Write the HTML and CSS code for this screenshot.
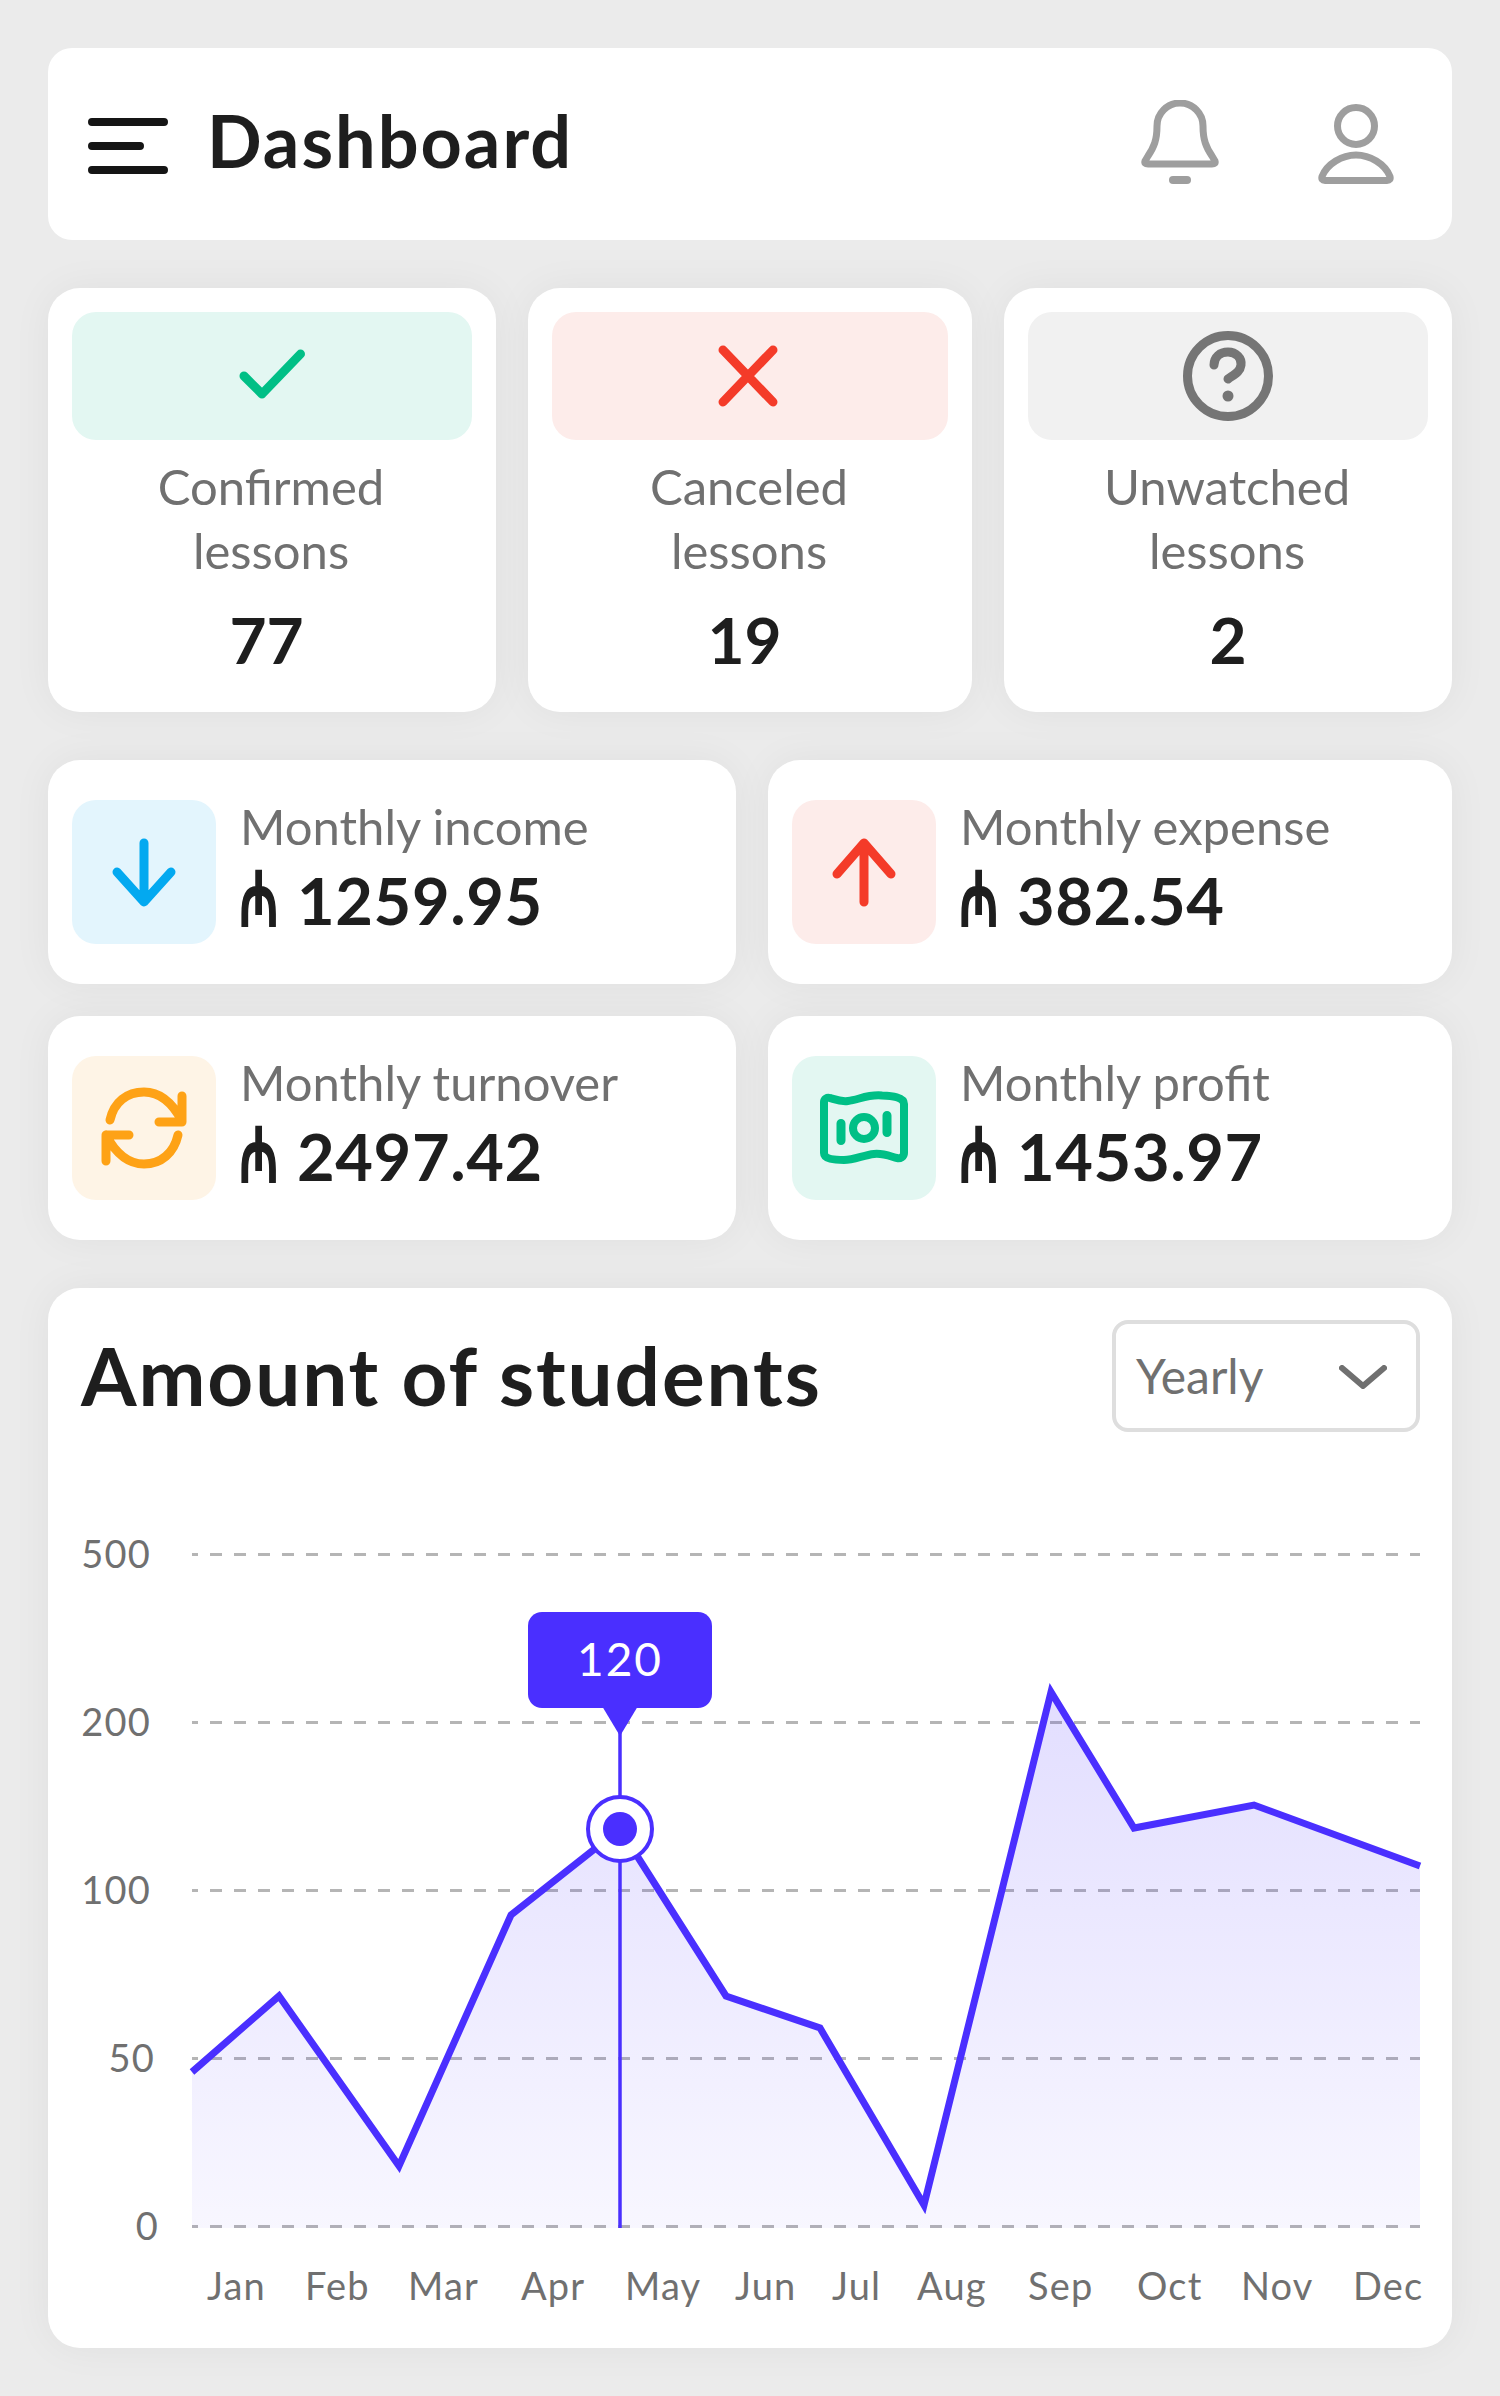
FILE: index.html

```html
<!DOCTYPE html>
<html lang="en">
<head>
  <meta charset="UTF-8">
  <title>Dashboard</title>
  <link rel="stylesheet" href="styles.css">
</head>
<body>
  <header class="topbar">
    <svg class="menu-icon" width="80" height="56" viewBox="0 0 80 56">
      <path d="M4 4H76M4 28H52M4 52H76" />
    </svg>
    <h1>Dashboard</h1>
    <svg class="bell-icon" width="80" height="84" viewBox="0 0 80 84">
      <path d="M17 26a23 23 0 0 1 46 0c0 14 3 21 9 30l3 5q1 3-3 3H8q-4 0-3-3l3-5c6-9 9-16 9-30z" />
      <path class="clapper" d="M33 80H47" />
    </svg>
    <svg class="user-icon" width="76" height="80" viewBox="0 0 76 80">
      <circle cx="38" cy="22" r="18.500" />
      <path d="M7 76.500H69q4 0 3-4C67 60 52 51 38 51S9 60 4 72.500q-1 4 3 4z" />
    </svg>
  </header>

  <section class="lessons">
    <div class="card lesson">
      <div class="lesson-icon bg-green">
        <svg width="80" height="80" viewBox="0 0 80 80"><path class="st-green" d="M12 40L30 58 68.500 18" /></svg>
      </div>
      <p class="label">Confirmed<br>lessons</p>
      <p class="count shift">77</p>
    </div>
    <div class="card lesson">
      <div class="lesson-icon bg-red">
        <svg width="80" height="80" viewBox="0 0 80 80"><path class="st-red" d="M13 14L63 66M63 14L13 66" /></svg>
      </div>
      <p class="label">Canceled<br>lessons</p>
      <p class="count shift">19</p>
    </div>
    <div class="card lesson">
      <div class="lesson-icon bg-grey">
        <svg width="100" height="100" viewBox="0 0 100 100">
          <circle class="st-grey" cx="50" cy="50" r="40.500" />
          <path class="st-grey" d="M36 39c0-8 6-13 14-13s14 6 13 13c-1 7-6 9-13 14" />
          <circle class="fl-grey" cx="50" cy="70" r="5.500" />
        </svg>
      </div>
      <p class="label">Unwatched<br>lessons</p>
      <p class="count">2</p>
    </div>
  </section>

  <section class="stats">
    <div class="card stat">
      <div class="stat-icon bg-blue">
        <svg width="144" height="144" viewBox="0 0 144 144"><path class="st-blue" d="M72 43V100M45 72L72 102 99 72" /></svg>
      </div>
      <div>
        <p class="label">Monthly income</p>
        <p class="amount"><span class="manat">₼</span> 1259.95</p>
      </div>
    </div>
    <div class="card stat">
      <div class="stat-icon bg-red">
        <svg width="144" height="144" viewBox="0 0 144 144"><path class="st-red" d="M72 102V44M45 74L72 43 99 74" /></svg>
      </div>
      <div>
        <p class="label">Monthly expense</p>
        <p class="amount"><span class="manat">₼</span> 382.54</p>
      </div>
    </div>
    <div class="card stat">
      <div class="stat-icon bg-orange">
        <svg width="144" height="144" viewBox="0 0 144 144">
          <path class="st-orange" d="M38 64C42 46 55 36 72 36C88 36 100 46 110 65M87 66H110V40" />
          <path class="st-orange" d="M106 79C102 97 89 108 72 108C56 108 44 98 34 79M57 79H34V105" />
        </svg>
      </div>
      <div>
        <p class="label">Monthly turnover</p>
        <p class="amount"><span class="manat">₼</span> 2497.42</p>
      </div>
    </div>
    <div class="card stat">
      <div class="stat-icon bg-green">
        <svg width="144" height="144" viewBox="0 0 144 144">
          <path class="st-green st-8" d="M32 46C32 43 35 41 38 42C42 43 48 46 56 45C66 44 76 38 90 39.500C100 40 112 41 112 48V97C112 101 108 103 105 102C100 101 92 97 82 98C72 99 62 104 52 104C42 104 32 103 32 97Z" />
          <circle class="st-green st-8" cx="72" cy="72" r="11" />
          <path class="st-green" d="M49 67.500V84.500M95 59.500V76.500" />
        </svg>
      </div>
      <div>
        <p class="label">Monthly profit</p>
        <p class="amount"><span class="manat">₼</span> 1453.97</p>
      </div>
    </div>
  </section>

  <section class="card chart-card">
    <div class="chart-head">
      <h2>Amount of students</h2>
      <div class="dropdown">
        <span>Yearly</span>
        <svg width="48" height="24" viewBox="0 0 48 24"><path d="M3 3L24 21 45 3" /></svg>
      </div>
    </div>
    <svg class="chart" width="1404" height="848" viewBox="48 1500 1404 848">
      <defs>
        <linearGradient id="areaFill" x1="0" y1="1689" x2="0" y2="2228" gradientUnits="userSpaceOnUse">
          <stop offset="0" stop-color="#4a2fff" stop-opacity="0.16" />
          <stop offset="1" stop-color="#4a2fff" stop-opacity="0.04" />
        </linearGradient>
      </defs>

      <path class="grid" d="M192 1554.500H1420M192 1722.500H1420M192 1890.500H1420M192 2058.500H1420M192 2226.500H1420" />

      <text class="axis" x="151" y="1568" text-anchor="end">500</text>
      <text class="axis" x="151" y="1736" text-anchor="end">200</text>
      <text class="axis" x="151" y="1904" text-anchor="end">100</text>
      <text class="axis" x="155" y="2072" text-anchor="end">50</text>
      <text class="axis" x="159" y="2240" text-anchor="end">0</text>

      <path fill="url(#areaFill)" d="M192 2072L279 1996 399 2166 511 1915 620 1829 726 1996 820 2028 924 2205 1051 1692 1134 1828 1254 1805 1420 1866V2228H192Z" />
      <path class="line" d="M192 2072L279 1996 399 2166 511 1915 620 1829 726 1996 820 2028 924 2205 1051 1692 1134 1828 1254 1805 1420 1866" />

      <path class="cursor" d="M620 1730V2228" />
      <circle class="dot-ring" cx="620" cy="1829" r="32" />
      <circle class="dot" cx="620" cy="1829" r="17" />

      <rect class="tip" x="528" y="1612" width="184" height="96" rx="14" />
      <path class="tip" d="M602 1706H638L620 1736Z" />
      <text class="tip-text" x="620" y="1676" text-anchor="middle">120</text>

      <text class="axis" x="207" y="2300">Jan</text>
      <text class="axis" x="305" y="2300">Feb</text>
      <text class="axis" x="408" y="2300">Mar</text>
      <text class="axis" x="521" y="2300">Apr</text>
      <text class="axis" x="625" y="2300">May</text>
      <text class="axis" x="735" y="2300">Jun</text>
      <text class="axis" x="832" y="2300">Jul</text>
      <text class="axis" x="917" y="2300">Aug</text>
      <text class="axis" x="1028" y="2300">Sep</text>
      <text class="axis" x="1137" y="2300">Oct</text>
      <text class="axis" x="1241" y="2300">Nov</text>
      <text class="axis" x="1353" y="2300">Dec</text>
    </svg>
  </section>
</body>
</html>
```

FILE: styles.css

```css
* {
  box-sizing: border-box;
}
body {
  margin: 0;
  padding: 48px;
  background-color: #ebebeb;
  font-family: "Lato", "Noto Sans", sans-serif;
  color: #1e1e1e;
}
p, h1, h2 {
  margin: 0;
}
svg {
  display: block;
  fill: none;
}
.card {
  background: #fff;
  border-radius: 32px;
  box-shadow: 0 0 40px rgba(0, 0, 0, 0.05);
}

/* top bar */
.topbar {
  display: flex;
  align-items: center;
  height: 192px;
  padding: 0 58px 0 40px;
  background: #fff;
  border-radius: 24px;
}
.topbar h1 {
  flex: 1;
  margin: 0 0 8px 39px;
  font-size: 72px;
  font-weight: 700;
  letter-spacing: 2px;
}
.menu-icon {
  margin-top: 4px;
}
.menu-icon path {
  stroke: #151515;
  stroke-width: 8;
  stroke-linecap: round;
}
.bell-icon, .user-icon {
  stroke: #9e9e9e;
  stroke-width: 7;
  stroke-linejoin: round;
}
.bell-icon {
  margin-bottom: 4px;
}
.user-icon {
  margin-left: 98px;
}
.clapper {
  stroke-width: 8;
  stroke-linecap: round;
}

/* lesson cards */
.lessons {
  display: grid;
  grid-template-columns: 448px 444px 448px;
  gap: 32px;
  margin-top: 48px;
}
.lesson {
  height: 424px;
  padding: 24px;
  text-align: center;
}
.lesson-icon {
  display: flex;
  align-items: center;
  justify-content: center;
  height: 128px;
  border-radius: 24px;
}
.label {
  font-size: 49px;
  line-height: 65px;
  color: #707070;
}
.lesson .label {
  margin-top: 14px;
  padding-right: 2px;
  line-height: 64px;
}
.count {
  margin-top: 14px;
  font-size: 64px;
  line-height: 88px;
  font-weight: 700;
}
.count.shift {
  padding-right: 11px;
}

/* monthly stats */
.stats {
  display: grid;
  grid-template-columns: 688px 684px;
  gap: 32px;
  margin-top: 48px;
}
.stat {
  display: flex;
  align-items: center;
  gap: 24px;
  height: 224px;
  padding: 0 24px;
}
.stat-icon {
  flex: none;
  width: 144px;
  height: 144px;
  border-radius: 24px;
}
.stat .label {
  margin-top: -12px;
}
.amount {
  margin-top: 2px;
  font-size: 65px;
  line-height: 78px;
  font-weight: 700;
  letter-spacing: 0.600px;
}
/* glyph comes out squat, stretch it to the tall arch */
.manat {
  display: inline-block;
  margin-right: -7px;
  font-family: "DejaVu Sans", sans-serif;
  font-weight: 700;
  font-size: 58px;
  line-height: 40px;
  -webkit-text-stroke: 1.500px #1e1e1e;
  transform: scale(0.8, 1.28);
  transform-origin: 0 40px;
}
.bg-green { background: #e3f7f2; }
.bg-red { background: #fdecea; }
.bg-grey { background: #f1f1f1; }
.bg-blue { background: #e3f5fd; }
.bg-orange { background: #fef4e6; }
.st-green, .st-red, .st-grey, .st-blue, .st-orange {
  fill: none;
  stroke-width: 9;
  stroke-linecap: round;
  stroke-linejoin: round;
}
.st-8 { stroke-width: 8; }
.st-green { stroke: #00bf86; }
.st-red { stroke: #f43b29; }
.st-grey { stroke: #757575; }
.st-blue { stroke: #03a9f0; }
.st-orange { stroke: #fea216; }
.fl-grey { fill: #757575; }

/* chart */
.chart-card {
  height: 1060px;
  margin-top: 48px;
  padding-top: 32px;
}
.chart-head {
  display: flex;
  align-items: center;
  justify-content: space-between;
  height: 112px;
  padding: 0 32px 0 33px;
  margin-bottom: 68px;
}
.chart-head h2 {
  margin-bottom: 3px;
  font-size: 80px;
  font-weight: 700;
  letter-spacing: 1.900px;
  color: #1e1e1e;
}
.dropdown {
  display: flex;
  align-items: center;
  justify-content: space-between;
  width: 308px;
  height: 112px;
  padding: 0 29px 0 20px;
  border: 4px solid #dedede;
  border-radius: 16px;
  font-size: 48px;
  color: #707070;
}
.dropdown span {
  margin-bottom: 2px;
}
.dropdown svg {
  margin-top: 2px;
}
.dropdown path {
  stroke: #707070;
  stroke-width: 6;
  stroke-linecap: round;
  stroke-linejoin: round;
}
.grid {
  stroke: #b5b5b5;
  stroke-width: 3;
  stroke-dasharray: 12 12;
  stroke-dashoffset: 6;
}
.axis {
  font-size: 38px;
  letter-spacing: 1.200px;
  fill: #707070;
}
.line {
  stroke: #4a2fff;
  stroke-width: 7;
}
.cursor {
  stroke: #4a2fff;
  stroke-width: 3.500;
}
.dot-ring {
  fill: #fff;
  stroke: #4a2fff;
  stroke-width: 4;
}
.dot, .tip {
  fill: #4a2fff;
}
.tip-text {
  font-size: 46px;
  letter-spacing: 2px;
  fill: #fff;
}
```
